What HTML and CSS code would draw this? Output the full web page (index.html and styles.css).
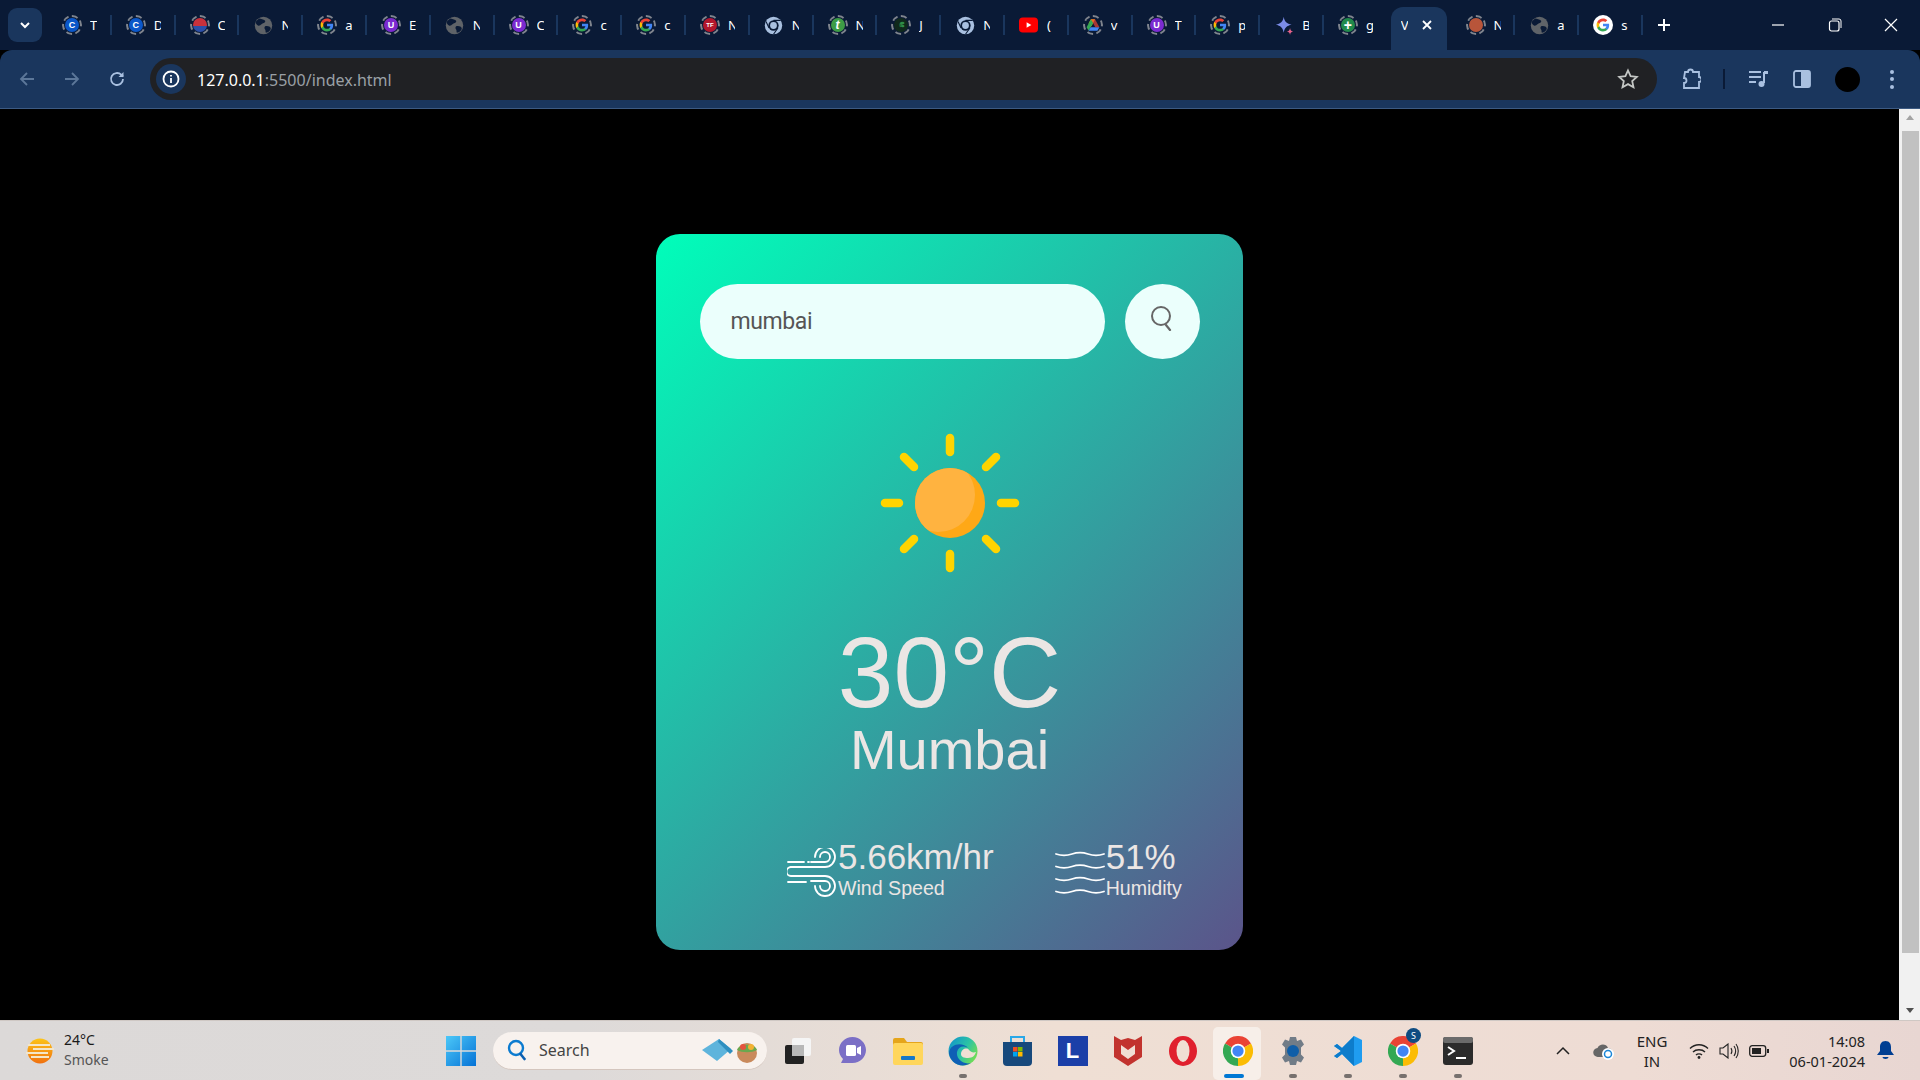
FILE: index.html
```html
<!DOCTYPE html>
<html lang="en">
<head>
    <meta charset="UTF-8">
    <meta name="viewport" content="width=device-width, initial-scale=1.0">
    <title>Weather App</title>
    <link rel="stylesheet" href="styles.css">
</head>
<body>
    <svg class="defs" width="0" height="0">
        <symbol id="g" viewBox="0 0 24 24">
            <path fill="#4285F4" d="M22.56 12.25c0-.78-.07-1.53-.2-2.25H12v4.26h5.92c-.26 1.37-1.04 2.53-2.21 3.31v2.77h3.57c2.08-1.92 3.28-4.74 3.28-8.09z"/>
            <path fill="#34A853" d="M12 23c2.97 0 5.46-.98 7.28-2.66l-3.57-2.77c-.98.66-2.23 1.06-3.71 1.06-2.86 0-5.29-1.93-6.16-4.53H2.18v2.84C3.99 20.53 7.7 23 12 23z"/>
            <path fill="#FBBC05" d="M5.84 14.09c-.22-.66-.35-1.36-.35-2.09s.13-1.43.35-2.09V7.07H2.18C1.43 8.55 1 10.22 1 12s.43 3.45 1.18 4.93l2.85-2.22.81-.62z"/>
            <path fill="#EA4335" d="M12 5.38c1.62 0 3.06.56 4.21 1.64l3.15-3.15C17.45 2.09 14.97 1 12 1 7.7 1 3.99 3.47 2.18 7.07l3.66 2.84c.87-2.6 3.3-4.53 6.16-4.53z"/>
        </symbol>
        <symbol id="globe" viewBox="0 0 24 24">
            <circle cx="12" cy="12" r="11" fill="#5f6368"/>
            <path fill="#0a1a36" d="M7 3c3 1 6 1 7 3s-2 3-4 4-3 3-5 2-3-3-3-4 3-4 5-5zM14 13c3-1 6 0 7 2s-3 6-6 6c-1-2 0-3-1-4s-1-3 0-4z"/>
        </symbol>
        <symbol id="paleChrome" viewBox="0 0 24 24">
            <circle cx="12" cy="12" r="11" fill="#a9c0e0"/>
            <circle cx="12" cy="12" r="6.5" fill="#0a1a36"/>
            <circle cx="12" cy="12" r="4.3" fill="#a9c0e0"/>
            <path d="M12 5.5h9M6.4 15.2 2.5 7M17.6 15.2 12 23" stroke="#0a1a36" stroke-width="1.4"/>
        </symbol>
        <symbol id="chrome" viewBox="0 0 24 24">
            <path fill="#ea4335" d="M12 12 1.6 6A12 12 0 0 1 22.4 6Z"/>
            <path fill="#fbbc04" d="M12 12 22.4 6A12 12 0 0 1 12 24Z"/>
            <path fill="#34a853" d="M12 12 12 24A12 12 0 0 1 1.6 6Z"/>
            <circle cx="12" cy="12" r="5.8" fill="#fff"/>
            <circle cx="12" cy="12" r="4.5" fill="#4285f4"/>
        </symbol>
    </svg>

    <div class="tabstrip">
        <button class="tab-search"><svg width="14" height="14" viewBox="0 0 14 14"><path d="M3 5l4 4 4-4" fill="none" stroke="#fff" stroke-width="2"/></svg></button>
        <div class="tab"><span class="ring"><span class="dot dot-blue">C</span></span><span class="tab-label">T</span></div>
        <div class="tab"><span class="ring"><span class="dot dot-blue">C</span></span><span class="tab-label">D</span></div>
        <div class="tab"><span class="ring"><span class="dot dot-flag"></span></span><span class="tab-label">C</span></div>
        <div class="tab"><svg class="fav"><use href="#globe"/></svg><span class="tab-label">N</span></div>
        <div class="tab"><span class="ring"><svg class="fav-in"><use href="#g"/></svg></span><span class="tab-label">a</span></div>
        <div class="tab"><span class="ring"><span class="dot dot-purple">U</span></span><span class="tab-label">E</span></div>
        <div class="tab"><svg class="fav"><use href="#globe"/></svg><span class="tab-label">N</span></div>
        <div class="tab"><span class="ring"><span class="dot dot-purple">U</span></span><span class="tab-label">C</span></div>
        <div class="tab"><span class="ring"><svg class="fav-in"><use href="#g"/></svg></span><span class="tab-label">c</span></div>
        <div class="tab"><span class="ring"><svg class="fav-in"><use href="#g"/></svg></span><span class="tab-label">c</span></div>
        <div class="tab"><span class="ring"><span class="dot dot-red">TF</span></span><span class="tab-label">N</span></div>
        <div class="tab"><svg class="fav"><use href="#paleChrome"/></svg><span class="tab-label">N</span></div>
        <div class="tab"><span class="ring"><span class="dot dot-green">t</span></span><span class="tab-label">N</span></div>
        <div class="tab"><span class="ring"><span class="dot dot-gfg">ഭ</span></span><span class="tab-label">J</span></div>
        <div class="tab"><svg class="fav"><use href="#paleChrome"/></svg><span class="tab-label">N</span></div>
        <div class="tab"><svg class="fav fav-yt" viewBox="0 0 20 16"><rect width="20" height="16" rx="4" fill="#f00"/><path d="M8 5l5 3-5 3z" fill="#fff"/></svg><span class="tab-label">(</span></div>
        <div class="tab"><span class="ring"><svg class="fav-in" viewBox="0 0 24 24"><path fill="#fbbc04" d="M8.5 2h7l-4 8-3.500 5.500L4.500 9z"/><path fill="#34a853" d="M8.500 2 1 16l3.500 6 8-14z"/><path fill="#4285f4" d="M8 16h15l-3.500 6H4.500z"/><path fill="#ea4335" d="M15.500 2 23 16h-7L8.500 2z" opacity=".7"/></svg></span><span class="tab-label">v</span></div>
        <div class="tab"><span class="ring"><span class="dot dot-purple">U</span></span><span class="tab-label">T</span></div>
        <div class="tab"><span class="ring"><svg class="fav-in"><use href="#g"/></svg></span><span class="tab-label">p</span></div>
        <div class="tab"><svg class="fav" viewBox="0 0 24 24"><path fill="#7b8ce8" d="M11 1c1 6 4 9 10 10-6 1-9 4-10 10-1-6-4-9-10-10 6-1 9-4 10-10z"/><path fill="#e8638c" d="M19 15c.4 3 1.500 4 4 4.500-2.500.5-3.600 1.500-4 4.500-.4-3-1.500-4-4-4.500 2.500-.5 3.600-1.500 4-4.500z"/></svg><span class="tab-label">B</span></div>
        <div class="tab"><span class="ring"><span class="dot dot-plus">+</span></span><span class="tab-label">g</span></div>
        <div class="tab tab-active"><span class="tab-label">V</span><svg class="tab-close" width="12" height="12" viewBox="0 0 12 12"><path d="M2 2l8 8M10 2l-8 8" stroke="#fff" stroke-width="1.800"/></svg></div>
        <div class="tab"><span class="ring"><span class="dot dot-rust"></span></span><span class="tab-label">N</span></div>
        <div class="tab"><svg class="fav"><use href="#globe"/></svg><span class="tab-label">a</span></div>
        <div class="tab"><span class="g-solid"><svg class="fav-in"><use href="#g"/></svg></span><span class="tab-label">s</span></div>
        <button class="tab-new"><svg width="14" height="14" viewBox="0 0 14 14"><path d="M7 1v12M1 7h12" stroke="#fff" stroke-width="2"/></svg></button>
        <div class="win-controls">
            <svg width="14" height="14" viewBox="0 0 14 14"><path d="M1 7h12" stroke="#fff" stroke-width="1.200"/></svg>
            <svg width="14" height="14" viewBox="0 0 14 14"><rect x="1.500" y="3" width="9.500" height="10" rx="2" fill="none" stroke="#fff" stroke-width="1.200"/><path d="M4 1h7a2 2 0 0 1 2 2v7" fill="none" stroke="#fff"/></svg>
            <svg width="14" height="14" viewBox="0 0 14 14"><path d="M1 1l12 12M13 1L1 13" stroke="#fff" stroke-width="1.200"/></svg>
        </div>
    </div>

    <div class="toolbar">
        <div class="nav-btns">
            <svg width="18" height="18" viewBox="0 0 18 18"><path d="M16 9H3M9 3L3 9l6 6" fill="none" stroke="#5c7799" stroke-width="1.800"/></svg>
            <svg width="18" height="18" viewBox="0 0 18 18"><path d="M2 9h13M9 3l6 6-6 6" fill="none" stroke="#5c7799" stroke-width="1.800"/></svg>
            <svg width="18" height="18" viewBox="0 0 18 18"><path d="M15 9a6 6 0 1 1-1.800-4.300L15 6.500" fill="none" stroke="#a9c0e0" stroke-width="1.800"/><path d="M15.500 2v5h-5z" fill="#a9c0e0"/></svg>
        </div>
        <div class="omnibox">
            <span class="site-info"><svg width="18" height="18" viewBox="0 0 18 18"><circle cx="9" cy="9" r="7.500" fill="none" stroke="#fff" stroke-width="1.800"/><path d="M9 8v5M9 5v1.600" stroke="#fff" stroke-width="1.800"/></svg></span>
            <span class="url"><span class="url-host">127.0.0.1</span>:5500/index.html</span>
            <svg class="star" width="22" height="22" viewBox="0 0 22 22"><path d="M11 2.500l2.600 5.700 6.200.7-4.600 4.200 1.300 6.100L11 16.100l-5.500 3.100 1.300-6.100-4.600-4.200 6.200-.7z" fill="none" stroke="#c4c7c5" stroke-width="1.800"/></svg>
        </div>
        <svg class="tool-ext" width="20" height="22" viewBox="0 0 20 22"><path d="M4 4h3a2.500 2.500 0 0 1 5 0h6v5a2.500 2.500 0 0 1 0 5v6H3v-5a2.500 2.500 0 0 0 0-5z" fill="none" stroke="#a9c0e0" stroke-width="1.800"/></svg>
        <span class="tool-sep"></span>
        <svg class="tool-queue" width="20" height="18" viewBox="0 0 20 18"><path d="M1 2h12M1 7h12M1 12h7" stroke="#a9c0e0" stroke-width="1.800"/><path d="M16 2v11" stroke="#a9c0e0" stroke-width="2"/><circle cx="13.500" cy="14" r="3" fill="#a9c0e0"/><path d="M16 1h4v3h-4z" fill="#a9c0e0"/></svg>
        <svg class="tool-panel" width="18" height="18" viewBox="0 0 18 18"><rect x="1" y="1" width="16" height="16" rx="2" fill="none" stroke="#a9c0e0" stroke-width="1.800"/><rect x="8" y="1" width="9" height="16" fill="#a9c0e0"/></svg>
        <span class="avatar"></span>
        <span class="kebab"><i></i><i></i><i></i></span>
    </div>

    <div class="viewport">
        <div class="content">
            <div class="card">
                <div class="search">
                    <input type="text" value="mumbai" placeholder="enter city name" spellcheck="false">
                    <button class="search-btn">
                        <svg width="24" height="26" viewBox="0 0 24 26"><circle cx="11" cy="11" r="9" fill="none" stroke="#666" stroke-width="2"/><path d="M16 20l4 5" stroke="#666" stroke-width="2.200" stroke-linecap="round"/></svg>
                    </button>
                </div>
                <div class="weather">
                    <svg class="weather-icon" width="140" height="140" viewBox="0 0 140 140">
                        <defs><clipPath id="sunClip"><circle cx="70" cy="70" r="35"/></clipPath></defs>
                        <g fill="none" stroke="#ffd400" stroke-width="8.500" stroke-linecap="round">
                            <path d="M70 5v14M70 121v14M5 70h14M121 70h14"/>
                            <path d="M24 24l10 10M116 24l-10 10M24 116l10-10M116 116l-10-10"/>
                        </g>
                        <circle cx="70" cy="70" r="35" fill="#ffa816"/>
                        <circle cx="58" cy="62" r="37" fill="#ffb340" clip-path="url(#sunClip)"/>
                    </svg>
                    <h1 class="temp">30°C</h1>
                    <h2 class="city">Mumbai</h2>
                    <div class="details">
                        <div class="col">
                            <svg class="col-icon" width="50" height="49" viewBox="0 0 50 49" fill="none" stroke="#fff" stroke-width="1.800" stroke-linecap="round">
                                <path d="M1 14h16M21 14h1"/>
                                <path d="M4 19H38a10 10 0 1 0-10-10"/>
                                <path d="M24 14H38a5 5 0 1 0-5-5"/>
                                <path d="M4 19a4.500 4.500 0 0 0 0 9H38a10 10 0 1 1-10 10"/>
                                <path d="M24 33H38a5 5 0 1 1-5 5"/>
                                <path d="M1 34h18"/>
                            </svg>
                            <div>
                                <p class="value">5.66km/hr</p>
                                <p class="label">Wind Speed</p>
                            </div>
                        </div>
                        <div class="col">
                            <svg class="col-icon" width="50" height="43" viewBox="0 0 50 43" fill="none" stroke="#fff" stroke-width="1.800" stroke-linecap="round">
                                <path d="M1 3c6 2 10 2 16 0s10-2 16 0 10 2 16 0"/>
                                <path d="M1 15.500c6 2 10 2 16 0s10-2 16 0 10 2 16 0"/>
                                <path d="M1 28c6 2 10 2 16 0s10-2 16 0 10 2 16 0"/>
                                <path d="M1 40.500c6 2 10 2 16 0s10-2 16 0 10 2 16 0"/>
                            </svg>
                            <div>
                                <p class="value">51%</p>
                                <p class="label">Humidity</p>
                            </div>
                        </div>
                    </div>
                </div>
            </div>
        </div>
        <div class="scrollbar">
            <span class="arrow-up"></span>
            <span class="thumb"></span>
            <span class="arrow-down"></span>
        </div>
    </div>

    <div class="taskbar">
        <div class="tb-weather">
            <svg width="30" height="26" viewBox="0 0 30 26"><defs><linearGradient id="hazeSun" x1="0" y1="0" x2="0" y2="1"><stop offset="0" stop-color="#fcc419"/><stop offset="1" stop-color="#f0700f"/></linearGradient></defs><circle cx="15" cy="13" r="12.500" fill="url(#hazeSun)"/><path d="M3 7h22M8 11h21M1 15h22M6 19h18" stroke="#f4e6c8" stroke-width="2"/></svg>
            <div class="tb-weather-text"><span class="tb-temp">24°C</span><span class="tb-cond">Smoke</span></div>
        </div>
        <svg class="tb-start" width="30" height="30" viewBox="0 0 30 30">
            <defs><linearGradient id="winBlue" x1="0" y1="0" x2="1" y2="1"><stop offset="0" stop-color="#4cc8f8"/><stop offset="1" stop-color="#0572d6"/></linearGradient></defs>
            <path fill="url(#winBlue)" d="M0 0h14.300v14.300H0zM15.700 0H30v14.300H15.700zM0 15.700h14.300V30H0zM15.700 15.700H30V30H15.700z"/>
        </svg>
        <div class="tb-search">
            <svg width="20" height="22" viewBox="0 0 20 22"><circle cx="9" cy="9" r="7" fill="none" stroke="#0b7bd0" stroke-width="2.400"/><path d="M13.500 15l4 5" stroke="#0b5fb0" stroke-width="2.600" stroke-linecap="round"/></svg>
            <span>Search</span>
            <svg class="tb-search-art" width="60" height="26" viewBox="0 0 60 26">
                <path d="M1 13 18 2l12 10-14 12z" fill="#5eb4dc"/><path d="M18 2l12 10 2 2-3 3-12-12z" fill="#2f8fc0"/>
                <circle cx="46" cy="16" r="10" fill="#c98a5c"/><path d="M36 13c2-7 18-7 20 0-5 3-15 3-20 0z" fill="#6aa84f"/><circle cx="42" cy="10" r="3" fill="#e5533d"/><circle cx="50" cy="10" r="3" fill="#f2b233"/>
            </svg>
        </div>
        <div class="tb-apps">
            <div class="app"><svg width="28" height="28" viewBox="0 0 28 28"><rect x="8" y="1" width="19" height="18" rx="2" fill="#f5f5f5"/><rect x="1" y="8" width="19" height="19" rx="2" fill="#222"/><rect x="8" y="8" width="12" height="11" fill="#b8b8b8"/></svg></div>
            <div class="app"><svg width="29" height="29" viewBox="0 0 29 29"><path d="M14.500 1C22 1 28 7 28 14s-6 13-13.500 13H3l2-4C2 20 1 17 1 14 1 7 7 1 14.500 1z" fill="#7b6fc6"/><rect x="8" y="9" width="10" height="11" rx="1.500" fill="#fff"/><path d="M19 12l4-2v9l-4-2z" fill="#fff"/></svg></div>
            <div class="app"><svg width="30" height="28" viewBox="0 0 30 28"><path d="M0 3a2 2 0 0 1 2-2h9l3 4h14a2 2 0 0 1 2 2v4H0z" fill="#e5a51b"/><rect y="6" width="30" height="22" rx="2" fill="#ffd65c"/><rect x="8" y="19" width="14" height="4" rx="1" fill="#1678c8"/></svg></div>
            <div class="app"><svg width="30" height="30" viewBox="0 0 30 30"><defs><linearGradient id="edgeA" x1="0" y1="0" x2="1" y2=".6"><stop offset="0" stop-color="#0f8fd0"/><stop offset=".6" stop-color="#2bc3a5"/><stop offset="1" stop-color="#6fdc57"/></linearGradient></defs><circle cx="15" cy="15" r="14.500" fill="url(#edgeA)"/><path d="M1 17C2 27 13 33 23 27 15 29 8 23 9 16 10 11 15 9 20 12 15 6 2 7 1 17z" fill="#0f5fb5"/><path d="M13 18c0-5 6-7 8-4 2 2 4 3 7 2-1 3-3 6-8 6-4 0-7-1-7-4z" fill="#f0dfd4"/></svg><span class="app-dot"></span></div>
            <div class="app"><svg width="29" height="31" viewBox="0 0 29 31"><path d="M8 7V2h13v5" fill="none" stroke="#2aa8e8" stroke-width="2"/><path d="M0 7h29v20a4 4 0 0 1-4 4H4a4 4 0 0 1-4-4z" fill="#17497c"/><path d="M10 12h4.500v4.500H10z" fill="#f25022"/><path d="M15 12h4.500v4.500H15z" fill="#7fba00"/><path d="M10 17h4.500v4.500H10z" fill="#00a4ef"/><path d="M15 17h4.500v4.500H15z" fill="#ffb900"/></svg></div>
            <div class="app"><span class="app-l">L</span></div>
            <div class="app"><svg width="28" height="31" viewBox="0 0 28 31"><path d="M0 1l7 4 7-2 7 2 7-4v21l-14 9-14-9z" fill="#c2332e"/><path d="M7 10l7 5 7-5v9l-7 5-7-5z" fill="#f0dfd4"/></svg></div>
            <div class="app"><svg width="28" height="30" viewBox="0 0 28 30"><ellipse cx="14" cy="15" rx="14" ry="15" fill="#e0202e"/><ellipse cx="14" cy="15" rx="6.500" ry="11" fill="#f0dfd4"/></svg></div>
            <div class="app app-active"><svg width="30" height="30"><use href="#chrome"/></svg><span class="app-bar"></span></div>
            <div class="app"><svg width="30" height="30" viewBox="0 0 30 30"><path fill="#717c87" d="M12 1h6l1 4 4-1.500 3 5-3 3v7l3 3-3 5-4-1.500-1 4h-6l-1-4-4 1.500-3-5 3-3v-7l-3-3 3-5 4 1.500z"/><circle cx="15" cy="15" r="6" fill="#0f5ea8"/></svg><span class="app-dot"></span></div>
            <div class="app"><svg width="30" height="30" viewBox="0 0 30 30"><path fill="#1f9cf0" d="M21 0l8 4v22l-8 4L9 18l-5 4-3-2 7-5-7-5 3-2 5 4z"/><path fill="#0065a9" d="M21 7l-9 8 9 8z" opacity=".3"/><path fill="#0d7ccb" d="M21 0 9 12 4 8l-3 2 7 5-7 5 3 2 5-4 12 12z"/></svg><span class="app-dot"></span></div>
            <div class="app"><svg width="30" height="30"><use href="#chrome"/></svg><span class="app-badge">S</span><span class="app-dot"></span></div>
            <div class="app"><svg width="30" height="28" viewBox="0 0 30 28"><rect width="30" height="28" rx="3" fill="#2b2b2b"/><rect width="30" height="6" rx="2" fill="#6b6b6b"/><path d="M5 10l6 4-6 4" fill="none" stroke="#fff" stroke-width="2"/><path d="M13 21h10" stroke="#fff" stroke-width="2"/></svg><span class="app-dot"></span></div>
        </div>
        <div class="tray">
            <svg class="tray-chevron" width="14" height="10" viewBox="0 0 14 10"><path d="M1 8l6-6 6 6" fill="none" stroke="#222" stroke-width="1.500"/></svg>
            <svg class="tray-cloud" width="22" height="18" viewBox="0 0 22 18"><path d="M5 15a4.500 4.500 0 0 1-.5-9C6 2 13 1 15 6c4 0 6 4 5 9z" fill="#666"/><circle cx="15" cy="12" r="6" fill="#fff"/><circle cx="15" cy="12" r="3.500" fill="none" stroke="#1a86d8" stroke-width="1.500"/></svg>
            <div class="tray-lang"><span>ENG</span><span>IN</span></div>
            <svg class="tray-wifi" width="20" height="16" viewBox="0 0 20 16"><path d="M1 5.500c5-5 13-5 18 0M4 9c3-3 9-3 12 0M7 12c1.500-1.500 4.500-1.500 6 0" fill="none" stroke="#222" stroke-width="1.400"/><circle cx="10" cy="14.500" r="1.400" fill="#222"/></svg>
            <svg class="tray-sound" width="20" height="16" viewBox="0 0 20 16"><path d="M1 5h3l5-4v14l-5-4H1z" fill="none" stroke="#222" stroke-width="1.100"/><path d="M12 5c1.200 2 1.200 4 0 6M15 3c2 3 2 7 0 10M17 1c3 4 3 10 0 14" fill="none" stroke="#222" stroke-width="1.100"/></svg>
            <svg class="tray-batt" width="20" height="12" viewBox="0 0 20 12"><rect x=".7" y=".7" width="16" height="10.600" rx="2.500" fill="none" stroke="#222" stroke-width="1.300"/><rect x="3" y="3" width="9" height="6" fill="#222"/><path d="M18 4h2v4h-2z" fill="#222"/></svg>
            <div class="tray-clock"><span>14:08</span><span>06-01-2024</span></div>
            <svg class="tray-bell" width="17" height="20" viewBox="0 0 17 20"><path d="M8.500 0C12.500 0 14 3 14 6v4l3 4H0l3-4V6c0-3 1.500-6 5.500-6z" fill="#003e92"/><path d="M5.500 16h6c0 2.500-6 2.500-6 0z" fill="#003e92"/></svg>
        </div>
    </div>
</body>
</html>
```

FILE: styles.css
```css
* {
    margin: 0;
    padding: 0;
    box-sizing: border-box;
}
body {
    width: 100vw;
    height: 100vh;
    overflow: hidden;
    display: flex;
    flex-direction: column;
    font-family: "Noto Sans", sans-serif;
    background: #000;
}
button {
    border: none;
    background: none;
}
.defs {
    position: absolute;
}

/* tabs */
.tabstrip {
    height: 50px;
    flex: none;
    display: flex;
    align-items: flex-start;
    background: #0a1a36;
}
.tab-search {
    width: 34px;
    height: 34px;
    margin: 8px 6px 0 8px;
    border-radius: 9px;
    background: #1a365d;
    display: flex;
    align-items: center;
    justify-content: center;
}
.tab {
    width: 63.8px;
    height: 50px;
    flex: none;
    display: flex;
    align-items: center;
    padding: 0 0 0 14px;
    position: relative;
}
.tab::after {
    content: "";
    position: absolute;
    right: 0;
    top: 15px;
    width: 2px;
    height: 20px;
    background: #1a365d;
}
.tab:nth-of-type(21)::after,
.tab:nth-of-type(22)::after {
    display: none;
}
.tab-active {
    padding-left: 13px;
}
.tab-active::before {
    content: "";
    position: absolute;
    left: 3px;
    right: 5px;
    top: 7px;
    bottom: 0;
    background: #1a365d;
    border-radius: 12px 12px 0 0;
}
.tab-active::after {
    display: none;
}
.tab-active .tab-label,
.tab-close {
    position: relative;
}
.tab-active .tab-label {
    margin-left: 0;
}
.tab-close {
    margin-left: 13px;
}
.ring {
    width: 20px;
    height: 20px;
    flex: none;
    border: 2px dashed #80858e;
    border-radius: 50%;
    display: flex;
    align-items: center;
    justify-content: center;
}
.g-solid {
    width: 20px;
    height: 20px;
    flex: none;
    border-radius: 50%;
    background: #fff;
    display: flex;
    align-items: center;
    justify-content: center;
}
.fav {
    width: 19px;
    height: 19px;
    flex: none;
    margin: 0 .5px;
}
.fav-yt {
    height: 16px;
}
.fav-in {
    width: 14px;
    height: 14px;
    flex: none;
}
.dot {
    width: 14px;
    height: 14px;
    border-radius: 50%;
    color: #fff;
    font: bold 9px/14px "Liberation Sans", sans-serif;
    text-align: center;
    overflow: hidden;
}
.dot-blue { background: #0b57c9; }
.dot-purple { background: #7b2bd0; }
.dot-red { background: #b3162c; font-size: 6px; }
.dot-green { background: #3d9c45; font-style: italic; font-size: 12px; }
.dot-gfg { background: #10291c; color: #2f8d46; font-size: 8px; }
.dot-plus { background: #218a4b; font-size: 14px; }
.dot-rust { background: #b8553a; }
.dot-flag { background: linear-gradient(180deg, #c9313b 55%, #2c4fa8 55%); }
.tab-label {
    width: 7px;
    margin-left: 8px;
    overflow: hidden;
    color: #fff;
    font-size: 13px;
    line-height: 18px;
    white-space: nowrap;
}
.tab-new {
    width: 42px;
    height: 50px;
    display: flex;
    align-items: center;
    justify-content: center;
}
.win-controls {
    margin-left: auto;
    width: 170px;
    height: 50px;
    padding: 0 22px 0 21px;
    display: flex;
    align-items: center;
    justify-content: space-between;
}

/* toolbar */
.toolbar {
    height: 59px;
    flex: none;
    display: flex;
    align-items: center;
    background: #1a365d;
    border-radius: 12px 12px 0 0;
    border-bottom: 1px solid #3c5a82;
}
.nav-btns {
    width: 150px;
    padding: 0 24px 0 18px;
    display: flex;
    justify-content: space-between;
}
.omnibox {
    width: 1507px;
    height: 42px;
    border-radius: 21px;
    background: #202124;
    display: flex;
    align-items: center;
    padding: 0 18px 0 6px;
}
.site-info {
    width: 30px;
    height: 30px;
    border-radius: 50%;
    background: #1a365d;
    display: flex;
    align-items: center;
    justify-content: center;
}
.url {
    margin: 2px 0 0 11px;
    color: #9aa0a6;
    font-size: 16px;
}
.url-host {
    color: #fff;
}
.star {
    margin-left: auto;
}
.tool-ext {
    margin-left: 24px;
}
.tool-sep {
    width: 2px;
    height: 20px;
    margin-left: 22px;
    background: #0a1a36;
}
.tool-queue {
    margin-left: 23px;
}
.tool-panel {
    margin-left: 25px;
}
.avatar {
    width: 25px;
    height: 25px;
    margin-left: 24px;
    border-radius: 50%;
    background: #000;
}
.kebab {
    margin-left: 30px;
    display: flex;
    flex-direction: column;
    gap: 3.5px;
}
.kebab i {
    width: 4px;
    height: 4px;
    border-radius: 50%;
    background: #a9c0e0;
}

/* page */
.viewport {
    flex: 1;
    display: flex;
    min-height: 0;
    background: #000;
}
.content {
    flex: 1;
    padding-top: 125px;
}
.card {
    width: 587px;
    height: 716px;
    margin: 0 auto;
    padding-top: 50px;
    border-radius: 24px;
    background: linear-gradient(135deg, #00feba, #5b548a);
    color: #ebe6e4;
    text-align: center;
}
.search {
    display: flex;
    justify-content: center;
    gap: 20px;
}
.search input {
    width: 405px;
    height: 75px;
    padding: 0 31px;
    border: none;
    outline: none;
    border-radius: 38px;
    background: #ebfffc;
    color: #555;
    font-family: Roboto, sans-serif;
    font-size: 23px;
    letter-spacing: -.4px;
}
.search-btn {
    width: 75px;
    height: 75px;
    border-radius: 50%;
    background: #ebfffc;
    display: flex;
    align-items: center;
    justify-content: center;
    padding: 0 0 8px 0;
}
.weather-icon {
    display: block;
    margin: 74px auto 0;
}
.temp {
    margin-top: 49px;
    font-family: "Liberation Sans", sans-serif;
    font-size: 100px;
    font-weight: 400;
    line-height: 100px;
}
.city {
    font-family: "Liberation Sans", sans-serif;
    font-size: 56px;
    font-weight: 400;
    line-height: 55px;
}
.details {
    display: flex;
    gap: 61px;
    margin-top: 60px;
    padding-left: 131px;
    font-family: "Liberation Sans", sans-serif;
    text-align: left;
}
.col {
    display: flex;
    align-items: center;
    gap: 1px;
}
.col-icon {
    margin-top: 8px;
    flex: none;
}
.value {
    font-size: 35px;
}
.label {
    font-size: 19.6px;
}

/* scrollbar */
.scrollbar {
    width: 21px;
    flex: none;
    background: #f1f1f1;
    display: flex;
    flex-direction: column;
    align-items: center;
}
.thumb {
    width: 17px;
    height: 822px;
    margin: 11px 0 0 2px;
    background: #c1c1c1;
}
.arrow-up,
.arrow-down {
    width: 0;
    height: 0;
    border-left: 4.5px solid transparent;
    border-right: 4.5px solid transparent;
}
.arrow-up {
    margin-top: 6px;
    border-bottom: 5px solid #a3a3a3;
}
.arrow-down {
    margin-top: 55px;
    border-top: 5px solid #505050;
}

/* taskbar */
.taskbar {
    height: 60px;
    flex: none;
    display: flex;
    align-items: center;
    border-top: 1px solid #cfc8c4;
    background: linear-gradient(90deg, #dcd9d8 0%, #dddad9 30%, #efdfd4 55%, #eedcd4 85%, #e8d6d2 100%);
}
.tb-weather {
    width: 446px;
    padding-left: 25px;
    display: flex;
    align-items: center;
    gap: 9px;
}
.tb-weather-text {
    display: flex;
    flex-direction: column;
    margin-top: -2px;
    font-size: 14px;
    line-height: 20px;
    color: #1a1a1a;
}
.tb-cond {
    color: #555;
}
.tb-search {
    width: 274px;
    height: 38px;
    margin-left: 17px;
    padding: 0 6px 0 14px;
    border-radius: 19px;
    background: #f8f2ee;
    border-bottom: 1px solid #d4c6be;
    display: flex;
    align-items: center;
    gap: 12px;
    color: #444;
    font-size: 16px;
}
.tb-search-art {
    margin-left: auto;
}
.tb-apps {
    width: 715px;
    flex: none;
    display: flex;
    margin-left: 3px;
}
.app {
    width: 55px;
    height: 58px;
    flex: none;
    display: flex;
    align-items: center;
    justify-content: center;
    position: relative;
}
.app-active::before {
    content: "";
    position: absolute;
    left: 3px;
    right: 4px;
    top: 5px;
    bottom: 0;
    border-radius: 5px;
    background: #f7efe9;
}
.app-active svg {
    position: relative;
}
.app-l {
    width: 30px;
    height: 30px;
    background: #1b3fa8;
    color: #fff;
    font: bold 22px/30px "Liberation Sans", sans-serif;
    text-align: center;
}
.app-bar {
    position: absolute;
    left: 14px;
    bottom: 2px;
    width: 20px;
    height: 4px;
    border-radius: 2px;
    background: #0078d4;
}
.app-dot {
    position: absolute;
    left: 24px;
    bottom: 2px;
    width: 8px;
    height: 4px;
    border-radius: 2px;
    background: #77716e;
}
.app-badge {
    position: absolute;
    right: 9px;
    top: 6px;
    width: 15px;
    height: 15px;
    border-radius: 50%;
    background: #0f4c81;
    color: #fff;
    font-size: 9px;
    line-height: 15px;
    text-align: center;
}
.tray {
    flex: 1;
    display: flex;
    align-items: center;
    padding-left: 71px;
    color: #222;
    font-size: 15px;
    line-height: 20px;
}
.tray-cloud { margin-left: 23px; }
.tray-lang {
    width: 40px;
    margin-left: 17px;
    display: flex;
    flex-direction: column;
    align-items: center;
}
.tray-wifi { margin-left: 17px; }
.tray-sound { margin-left: 10px; }
.tray-batt { margin-left: 10px; }
.tray-clock {
    width: 96px;
    display: flex;
    flex-direction: column;
    align-items: flex-end;
    font-size: 14.5px;
}
.tray-bell { margin-left: 12px; }
```
